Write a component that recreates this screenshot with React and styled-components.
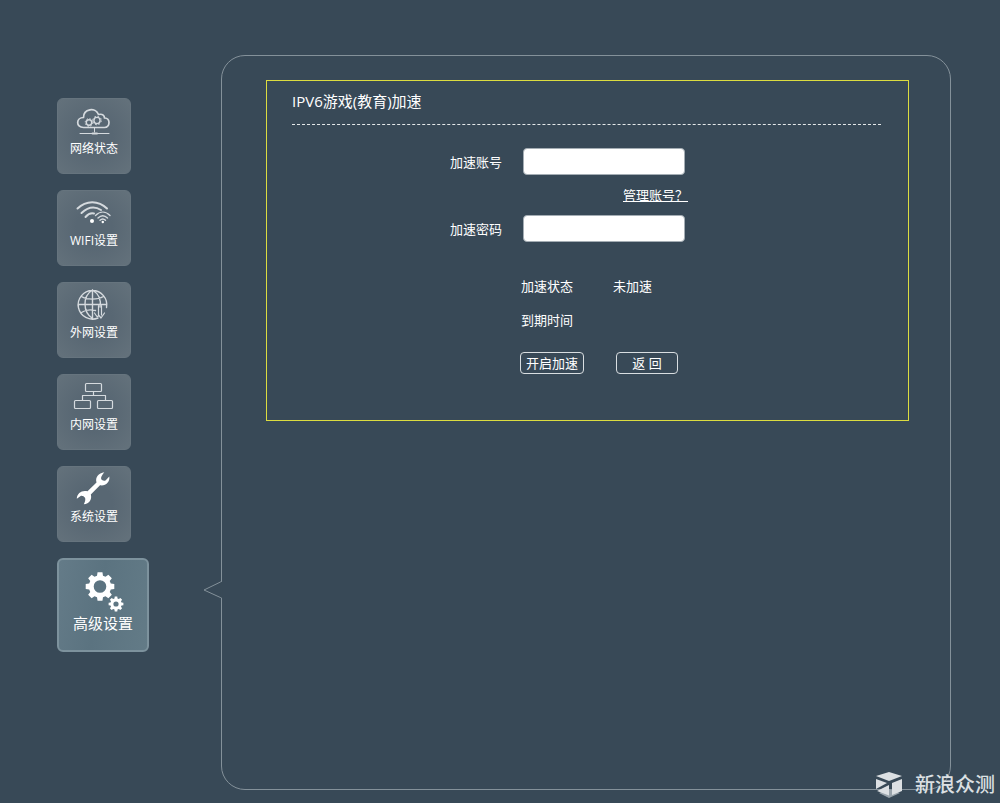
import React from "react";
import styled, { createGlobalStyle } from "styled-components";

const Global = createGlobalStyle`
  *, *::before, *::after { box-sizing: border-box; }
  body {
    margin: 0;
    background: #384957;
    color: #fff;
    font: 13px/20px "Open Sans", "Noto Sans CJK SC", sans-serif;
  }
  button, input { font: inherit; color: inherit; }
`;

const Page = styled.div`
  position: relative;
  display: flex;
  gap: 72px;
  min-height: 100vh;
  padding: 55px 49px 13px 57px;
`;

const Nav = styled.nav`
  display: flex;
  flex: none;
  flex-direction: column;
  align-items: flex-start;
  gap: 16px;
  width: 92px;
  padding-top: 43px;
`;

const Tile = styled.button`
  display: flex;
  flex-direction: column;
  align-items: center;
  width: ${(p) => (p.$active ? "92px" : "74px")};
  height: ${(p) => (p.$active ? "94px" : "76px")};
  padding: ${(p) => (p.$active ? "9px 0 0" : "0")};
  border: ${(p) => (p.$active ? "2px solid #7d929d" : "1px solid #66747e")};
  border-radius: 6px;
  background: ${(p) =>
    p.$active
      ? "linear-gradient(100deg, #647b88, #5b7380 45%, #637b87)"
      : "radial-gradient(circle, #586773 35%, #63717b 95%)"};
  font-size: ${(p) => (p.$active ? "15px" : "12px")};
  line-height: 20px;
  cursor: pointer;

  svg { display: block; flex: none; }
`;

const Panel = styled.main`
  position: relative;
  flex: 1;
  min-width: 0;
  padding: 24px 41px 24px 44px;
  border: 1px solid #84919a;
  border-radius: 24px;
`;

const Pointer = styled.svg`
  position: absolute;
  top: 524px;
  left: -19px;
`;

const Card = styled.section`
  min-height: 341px;
  padding: 0 27px 44px 25px;
  border: 1px solid #dcdc40;
`;

const Title = styled.h1`
  margin: 0;
  padding: 9px 0 12px;
  border-bottom: 1px dashed #e4e8ea;
  font-size: 15px;
  font-weight: 400;
  line-height: 22px;
`;

const Form = styled.form`
  padding: 23px 0 0 158px;
`;

const Field = styled.div`
  display: flex;
  align-items: center;

  label { width: 73px; }
`;

const TextBox = styled.input`
  width: 162px;
  height: 27px;
  padding: 0 8px;
  border: 1px solid #a4adb4;
  border-radius: 4px;
  background: #fff;
  color: #222;
`;

const LinkRow = styled.div`
  display: flex;
  justify-content: flex-end;
  width: 238px;
  padding: 10px 0;
`;

const Link = styled.a`
  color: #fff;
  text-decoration: underline;
`;

const Details = styled.dl`
  display: grid;
  grid-template-columns: 92px auto;
  row-gap: 14px;
  margin: 34px 0 22px 71px;

  dd { margin: 0; }
`;

const Actions = styled.div`
  display: flex;
  gap: 32px;
  margin-left: 70px;
`;

const Button = styled.button`
  width: ${(p) => (p.$wide ? "64px" : "62px")};
  height: 22px;
  padding: 0;
  border: 1px solid #d9dee1;
  border-radius: 4px;
  background: transparent;
  line-height: 20px;
  white-space: nowrap;
  cursor: pointer;
`;

const Watermark = styled.div`
  position: absolute;
  right: 5px;
  bottom: 4px;
  display: flex;
  align-items: center;
  gap: 12px;
  color: #dce0e3;
  font-size: 20px;
  font-weight: 500;
  line-height: 28px;
`;

function gearPath(cx, cy, outer, inner, hole) {
  const pts = [];
  for (let i = 0; i < 8; i += 1) {
    const mid = (i * Math.PI) / 4;
    [[-0.27, inner], [-0.17, outer], [0.17, outer], [0.27, inner]].forEach(([d, r]) => {
      pts.push(`${(cx + r * Math.sin(mid + d)).toFixed(2)} ${(cy - r * Math.cos(mid + d)).toFixed(2)}`);
    });
  }
  return `M${pts.join("L")}ZM${cx - hole} ${cy}a${hole} ${hole} 0 1 0 ${hole * 2} 0a${hole} ${hole} 0 1 0 ${-hole * 2} 0Z`;
}

const Line = styled.svg.attrs({ width: 48, height: 40, viewBox: "0 0 48 40", "aria-hidden": true })`
  fill: none;
  stroke: #d5dade;
  stroke-linecap: round;
  stroke-linejoin: round;
`;

const CloudIcon = () => (
  <Line strokeWidth="1.7">
    <path d="M15 28.500H13.500C5.500 28.500 6 18.500 13.500 18.500C13.500 9.500 25.500 8 28.500 15.500C33 14.500 34.500 17 34.500 19C40.500 18.500 40.500 28.500 34.500 28.500H15Z" />
    <circle cx="19" cy="23.500" r="2.700" strokeWidth="1.400" />
    <circle cx="19" cy="23.500" r="3.800" strokeWidth="1" strokeDasharray="1.500 1.480" strokeLinecap="butt" />
    <circle cx="27" cy="21.500" r="3.100" strokeWidth="1.400" />
    <circle cx="27" cy="21.500" r="4.300" strokeWidth="1" strokeDasharray="1.700 1.670" strokeLinecap="butt" />
    <path d="M24.500 29V33M10 34.500H39" strokeWidth="1" />
    <path d="M22.500 34.500H27" strokeWidth="2" />
  </Line>
);

const WifiIcon = () => (
  <Line strokeWidth="2">
    <path d="M7.500 17.500C16 9 28.500 9 37 17.500M11.500 22C18.500 15.500 25.500 15.500 31 19M15.500 26C18.500 22.500 21.500 21.800 24 22.500" />
    <circle cx="22" cy="30" r="2" fill="#fff" stroke="none" />
    <path d="M25.500 24.500C30 20 35.500 20 40 24.500M28 27C31 24 34.500 24 37.500 27M30 29.300C32 27.300 33.500 27.300 35.500 29.300" strokeWidth="1.400" />
    <circle cx="32.800" cy="31" r="1.200" fill="#fff" stroke="none" />
  </Line>
);

const GlobeIcon = () => (
  <Line strokeWidth="1.400">
    <path d="M28 35A14.300 14.300 0 1 1 36.500 24.500M22.500 7V35.500M22.500 7C12.500 13 12.500 29 22.500 35.500M22.500 7C30.500 12 31 19 30 24M8.500 21.500H36.500M11.500 13.500C17 17 27.500 17 33.500 13.500M11.500 29.500C15 27 21 26.500 25.500 27.500" />
    <path d="M28.500 22.500V32Q28.500 34.500 26.500 33L24.500 30M28.500 32L31 35L34.500 30M31.500 22.500V32" strokeWidth="1.200" />
  </Line>
);

const LanIcon = () => (
  <Line strokeWidth="1.200">
    <path d="M16.500 8.500H30.500Q31.500 8.500 31.500 9.500V15.500Q31.500 16.500 30.500 16.500H16.500Q15.500 16.500 15.500 15.500V9.500Q15.500 8.500 16.500 8.500ZM5.500 25.500H19.500Q20.500 25.500 20.500 26.500V32.500Q20.500 33.500 19.500 33.500H5.500Q4.500 33.500 4.500 32.500V26.500Q4.500 25.500 5.500 25.500ZM28.500 25.500H41.500Q42.500 25.500 42.500 26.500V32.500Q42.500 33.500 41.500 33.500H28.500Q27.500 33.500 27.500 32.500V26.500Q27.500 25.500 28.500 25.500Z" />
    <path d="M23.500 16.500V20.500M12.500 25V20.500H35.500V25" />
  </Line>
);

const WrenchIcon = () => (
  <Line>
    <path
      stroke="none"
      fill="#fff"
      d="M34.300 5.300C28.500 6 25 10.500 26.500 15.500L17.500 24.300C12.500 22.800 7 25.500 6.800 31.800L11 28.800Q13.500 28.500 15 30.800Q16 33 13.800 37.300C19.500 36.500 22.200 32 20.800 27.400L30 18.300C35.500 19.300 40.200 15 39.300 9.500L35.500 13.500Q32.500 14.200 31.200 12.200Q30.400 9.800 34.300 5.300Z"
    />
  </Line>
);

const GearsIcon = () => (
  <svg width="56" height="44" viewBox="0 0 56 44" fill="#fff" fillRule="evenodd" aria-hidden="true">
    <path d={gearPath(25, 17.5, 14.5, 11.2, 6.3)} />
    <path d={gearPath(41, 35, 7.5, 5.7, 2.6)} />
  </svg>
);

const items = [
  ["网络状态", CloudIcon],
  ["WIFI设置", WifiIcon],
  ["外网设置", GlobeIcon],
  ["内网设置", LanIcon],
  ["系统设置", WrenchIcon],
  ["高级设置", GearsIcon],
];

export default function App() {
  return (
    <>
      <Global />
      <Page>
        <Nav>
          {items.map(([label, Icon], i) => (
            <Tile key={label} type="button" $active={i === 5} aria-current={i === 5 ? "page" : undefined}>
              <Icon />
              {label}
            </Tile>
          ))}
        </Nav>
        <Panel>
          <Pointer width="20" height="20" viewBox="0 0 20 20" aria-hidden="true">
            <path d="M18.500 1.500L1 10L18.500 18" fill="#384957" stroke="#84919a" />
            <path d="M18.500 2V17.500" stroke="#384957" strokeWidth="1.500" />
          </Pointer>
          <Card>
            <Title>IPV6游戏(教育)加速</Title>
            <Form onSubmit={(e) => e.preventDefault()}>
              <Field>
                <label htmlFor="account">加速账号</label>
                <TextBox id="account" type="text" />
              </Field>
              <LinkRow>
                <Link href="#account">管理账号？</Link>
              </LinkRow>
              <Field>
                <label htmlFor="password">加速密码</label>
                <TextBox id="password" type="password" />
              </Field>
              <Details>
                <dt>加速状态</dt>
                <dd>未加速</dd>
                <dt>到期时间</dt>
                <dd />
              </Details>
              <Actions>
                <Button type="submit" $wide>开启加速</Button>
                <Button type="button">返 回</Button>
              </Actions>
            </Form>
          </Card>
        </Panel>
        <Watermark>
          <svg width="28" height="28" viewBox="0 0 28 28" aria-hidden="true">
            <path d="M4 22L14 18L25 22L14 27Z" fill="#98a3ab" />
            <path d="M1 5L14 1L27 5L14 10Z" fill="#dce0e3" />
            <path d="M1 8L12 12L1 18Z" fill="#dce0e3" />
            <path d="M27 8V20L17 24V12Z" fill="#dce0e3" />
            <path d="M2 20L14 14V24.500Z" fill="#dce0e3" />
          </svg>
          新浪众测
        </Watermark>
      </Page>
    </>
  );
}
